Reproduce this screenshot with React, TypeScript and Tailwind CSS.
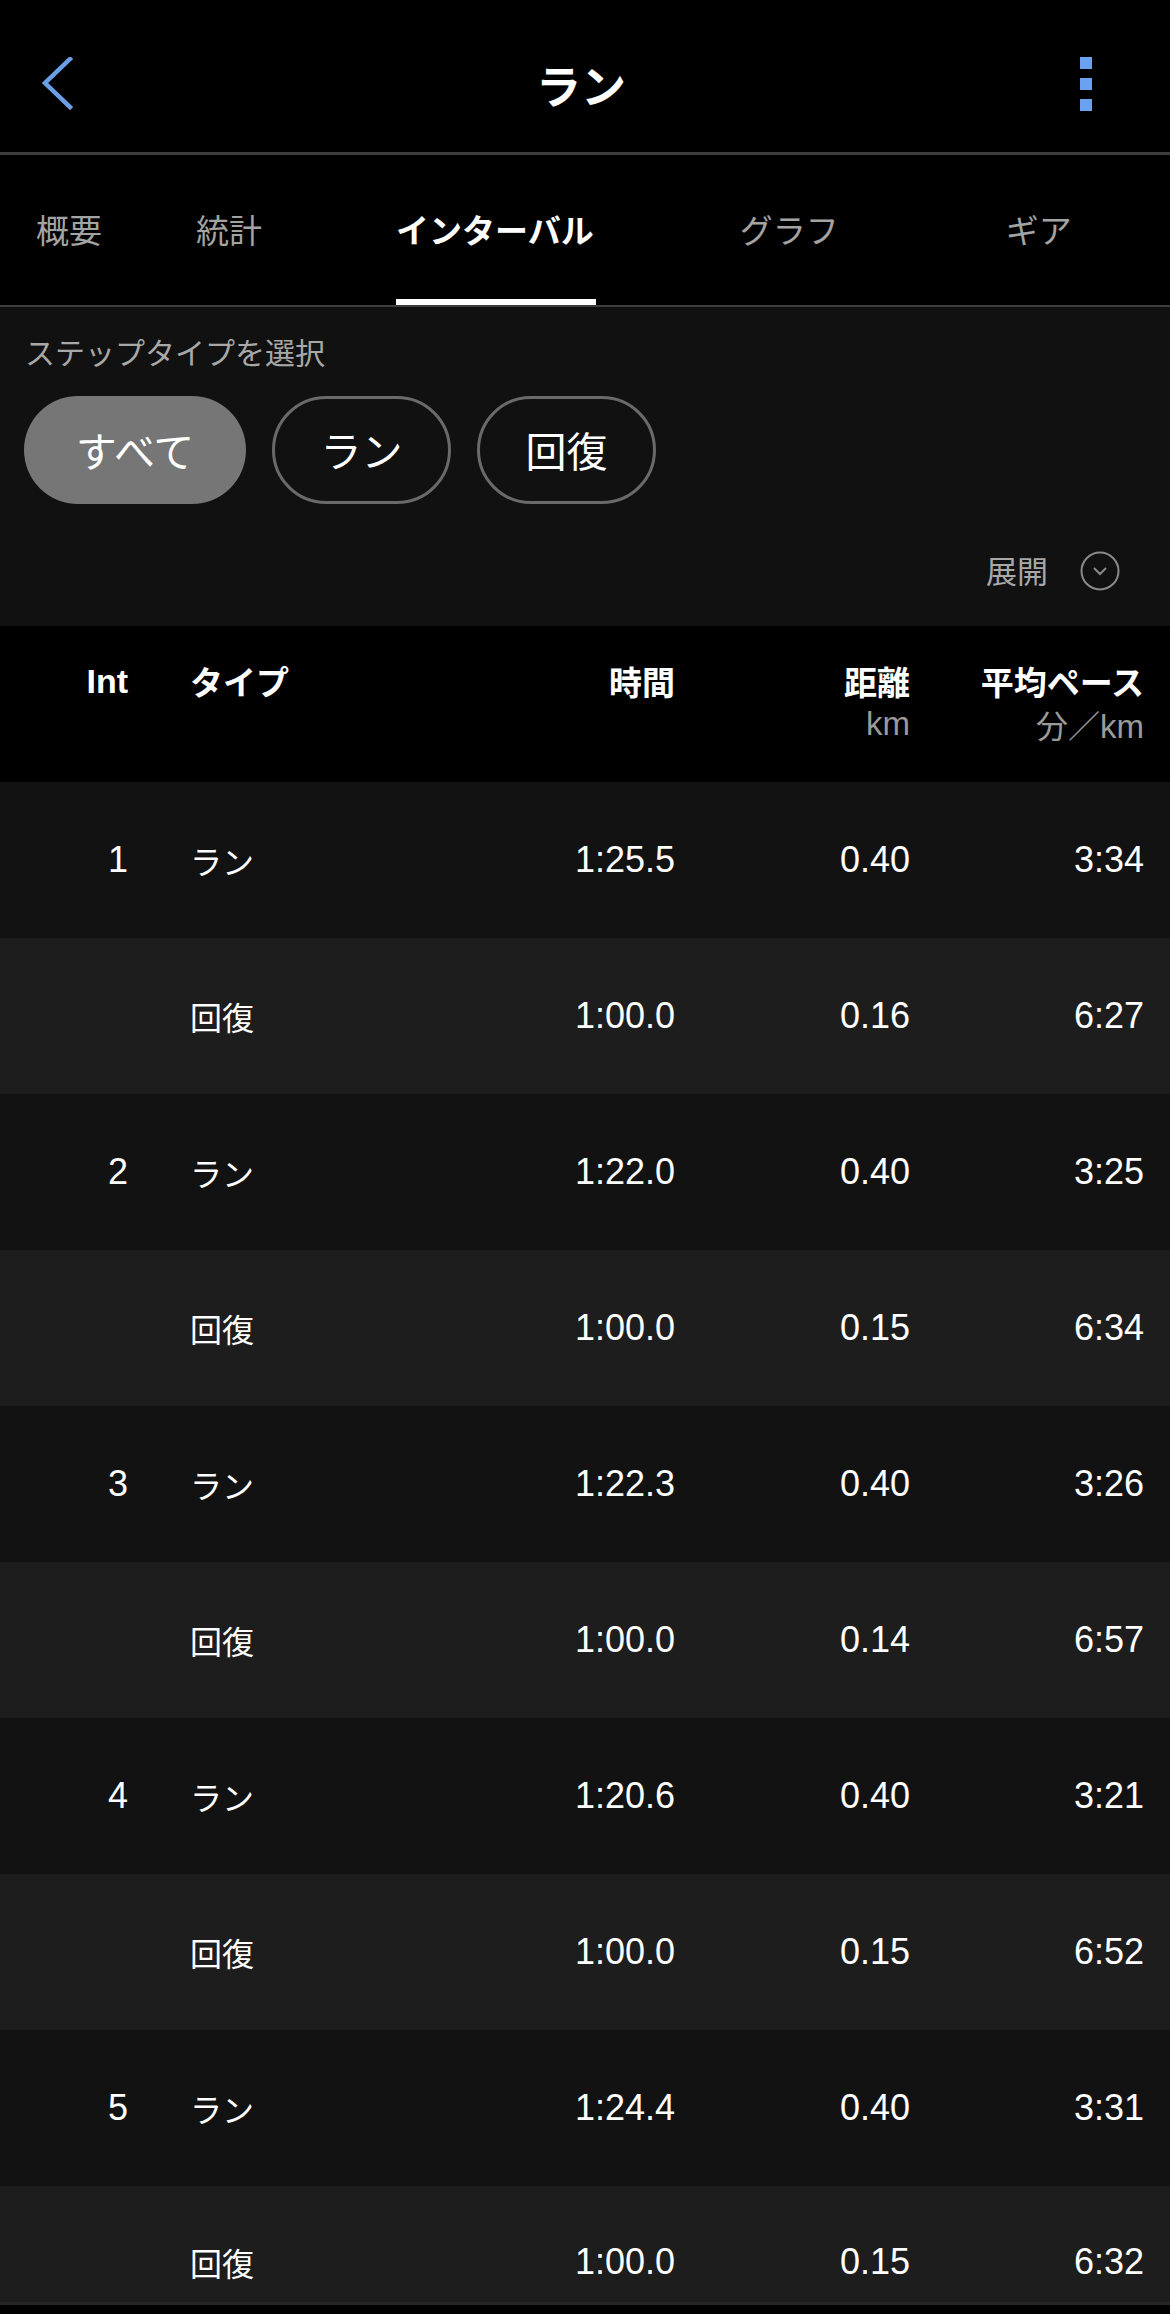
import React from "react";

const jp = "font-['Noto_Sans_CJK_JP',sans-serif]";
const num = "font-['Liberation_Sans_Narrow','Liberation_Sans',sans-serif]";

type Row = { n?: string; type: string; time: string; dist: string; pace: string };

const rows: Row[] = [
  { n: "1", type: "ラン", time: "1:25.5", dist: "0.40", pace: "3:34" },
  { type: "回復", time: "1:00.0", dist: "0.16", pace: "6:27" },
  { n: "2", type: "ラン", time: "1:22.0", dist: "0.40", pace: "3:25" },
  { type: "回復", time: "1:00.0", dist: "0.15", pace: "6:34" },
  { n: "3", type: "ラン", time: "1:22.3", dist: "0.40", pace: "3:26" },
  { type: "回復", time: "1:00.0", dist: "0.14", pace: "6:57" },
  { n: "4", type: "ラン", time: "1:20.6", dist: "0.40", pace: "3:21" },
  { type: "回復", time: "1:00.0", dist: "0.15", pace: "6:52" },
  { n: "5", type: "ラン", time: "1:24.4", dist: "0.40", pace: "3:31" },
  { type: "回復", time: "1:00.0", dist: "0.15", pace: "6:32" },
];

export default function App() {
  return (
    <div className={`w-[1170px] h-[2314px] overflow-hidden bg-black text-white ${jp}`}>
      {/* Header */}
      <div className="h-[152px] pt-[16px] flex items-center justify-between pl-[42px] pr-[78px]">
        <svg width="32" height="54" viewBox="0 0 32 54" className="shrink-0">
          <path d="M28 2 L3 26 L28 50" fill="none" stroke="#6a9fe6" strokeWidth="4.5" strokeLinecap="square" />
        </svg>
        <div className="text-[45px] font-bold leading-none ml-[8px]">ラン</div>
        <div className="flex flex-col gap-[9px]">
          <div className="w-[12px] h-[12px] bg-[#6aa1f0]" />
          <div className="w-[12px] h-[12px] bg-[#6aa1f0]" />
          <div className="w-[12px] h-[12px] bg-[#6aa1f0]" />
        </div>
      </div>
      <div className="h-[3px] bg-[#3d3d3d]" />

      {/* Tabs */}
      <div className="h-[150px] flex items-stretch text-[33px] text-[#a3a3a3]">
        <div className="ml-[36px] flex items-center">概要</div>
        <div className="ml-[94px] flex items-center">統計</div>
        <div className="ml-[134px] relative flex items-center text-white font-bold">
          インターバル
          <div className="absolute left-0 right-[-2px] bottom-0 h-[6px] bg-white" />
        </div>
        <div className="ml-[146px] flex items-center">グラフ</div>
        <div className="ml-[167px] flex items-center">ギア</div>
      </div>
      <div className="h-[2px] bg-[#3d3d3d]" />

      {/* Filter section */}
      <div className="bg-[#111111] h-[319px] pt-[26px]">
        <div className="pl-[25px] text-[30px] leading-[36px] text-[#a8a8a8]">ステップタイプを選択</div>
        <div className="flex gap-[26px] pl-[24px] mt-[27px]">
          <div className="h-[108px] w-[222px] rounded-full bg-[#767676] flex items-center justify-center text-[41px] text-white">すべて</div>
          <div className="h-[108px] w-[179px] rounded-full border-[3px] border-[#6a6a6a] flex items-center justify-center text-[41px] text-white">ラン</div>
          <div className="h-[108px] w-[179px] rounded-full border-[3px] border-[#6a6a6a] flex items-center justify-center text-[41px] text-white">回復</div>
        </div>
        <div className="flex justify-end items-center pr-[50px] mt-[47px] h-[39px]">
          <span className="text-[31px] text-[#a8a8a8] mr-[32px]">展開</span>
          <svg width="40" height="40" viewBox="0 0 40 40">
            <circle cx="20" cy="20" r="18.5" fill="none" stroke="#8a8a8a" strokeWidth="2" />
            <path d="M14 17 L20 23 L26 17" fill="none" stroke="#8a8a8a" strokeWidth="2" />
          </svg>
        </div>
      </div>

      {/* Table header */}
      <div className="h-[156px] bg-black grid grid-cols-[128px_1fr_234px_235px_234px] pr-[26px] pt-[34px] font-bold text-[33px] leading-[42px]">
        <div className={`text-right ${num} text-[34px]`}>Int</div>
        <div className="pl-[62px]">タイプ</div>
        <div className="text-right">時間</div>
        <div className="text-right">
          <div>距離</div>
          <div className={`mt-[4px] font-normal text-[#9a9a9a] text-[33px] leading-[36px] ${num}`}>km</div>
        </div>
        <div className="text-right">
          <div>平均ペース</div>
          <div className="mt-[4px] font-normal text-[#9a9a9a] text-[32px] leading-[36px]">
            分／<span className={`${num} text-[33px]`}>km</span>
          </div>
        </div>
      </div>

      {/* Rows */}
      {rows.map((r, i) => {
        const last = i === rows.length - 1;
        return (
          <div
            key={i}
            className={`grid grid-cols-[128px_1fr_234px_235px_234px] pr-[26px] items-center ${
              i % 2 === 0 ? "bg-[#121212]" : "bg-[#1d1d1d]"
            } ${last ? "h-[119px] pt-[36px] border-b-[3px] border-[#262626]" : "h-[156px]"}`}
          >
            <div className={`text-right text-[36px] ${num}`}>{r.n ?? ""}</div>
            <div className="pl-[62px] text-[32px]">{r.type}</div>
            <div className={`text-right text-[36px] ${num}`}>{r.time}</div>
            <div className={`text-right text-[36px] ${num}`}>{r.dist}</div>
            <div className={`text-right text-[36px] ${num}`}>{r.pace}</div>
          </div>
        );
      })}
    </div>
  );
}
